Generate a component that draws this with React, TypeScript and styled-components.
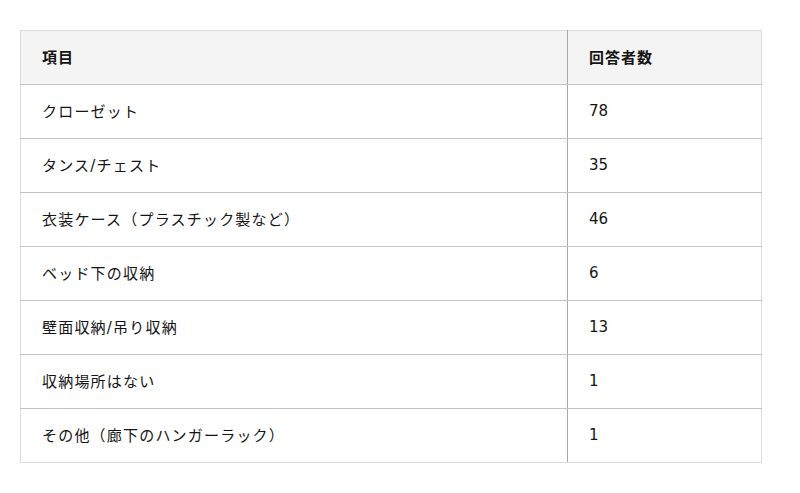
import React from "react";
import styled, { createGlobalStyle } from "styled-components";

const Global = createGlobalStyle`
  html, body { margin: 0; padding: 0; background: #ffffff; }
  body { font-family: "DejaVu Sans", "Noto Sans CJK JP", sans-serif; color: #151515; }
`;

const Page = styled.div`
  padding: 30px 38px 30px 20px;
`;

const Table = styled.table`
  width: 742px;
  border-collapse: collapse;
  border: 1px solid #dcdcdc;
  font-size: 15px;
  letter-spacing: 1px;
`;

const HeadCell = styled.th<{ $narrow?: boolean }>`
  height: 54px;
  box-sizing: border-box;
  padding: 0 21px 3px;
  text-align: left;
  font-weight: bold;
  background: #f4f4f4;
  border-bottom: 1px solid #c4c4c4;
  border-left: ${(p) => (p.$narrow ? "1px solid #a8a8a8" : "none")};
  width: ${(p) => (p.$narrow ? "194px" : "auto")};
`;

const Cell = styled.td<{ $narrow?: boolean }>`
  height: 54px;
  box-sizing: border-box;
  padding: 0 21px 2px;
  border-bottom: 1px solid #c4c4c4;
  border-left: ${(p) => (p.$narrow ? "1px solid #a8a8a8" : "none")};
  letter-spacing: ${(p) => (p.$narrow ? "0" : "1.2px")};
`;

const Row = styled.tr`
  &:last-child td { border-bottom: 1px solid #dcdcdc; }
`;

const rows: [string, string][] = [
  ["クローゼット", "78"],
  ["タンス/チェスト", "35"],
  ["衣装ケース（プラスチック製など）", "46"],
  ["ベッド下の収納", "6"],
  ["壁面収納/吊り収納", "13"],
  ["収納場所はない", "1"],
  ["その他（廊下のハンガーラック）", "1"],
];

export default function App() {
  return (
    <>
      <Global />
      <Page>
        <Table>
          <thead>
            <tr>
              <HeadCell>項目</HeadCell>
              <HeadCell $narrow>回答者数</HeadCell>
            </tr>
          </thead>
          <tbody>
            {rows.map(([label, n]) => (
              <Row key={label}>
                <Cell>{label}</Cell>
                <Cell $narrow>{n}</Cell>
              </Row>
            ))}
          </tbody>
        </Table>
      </Page>
    </>
  );
}
